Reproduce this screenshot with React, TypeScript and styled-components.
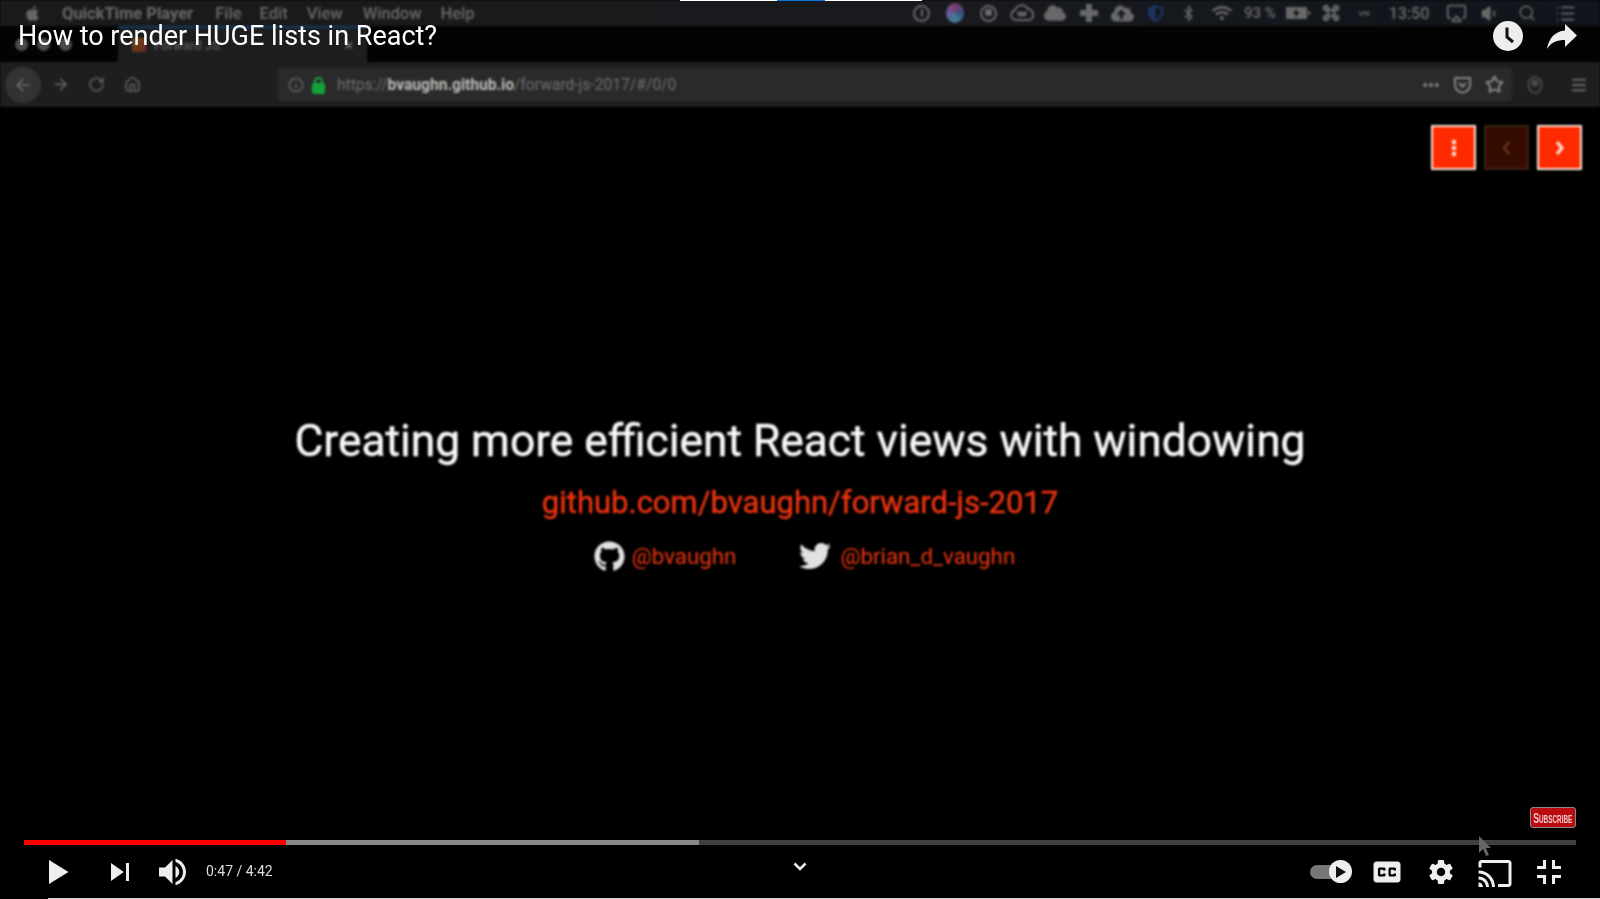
import React from 'react';
import styled, { createGlobalStyle } from 'styled-components';
import {
  FaApple,
  FaBluetoothB,
  FaCloud,
  FaCloudUploadAlt,
  FaGithub,
  FaShieldAlt,
  FaTwitter,
  FaWifi,
} from 'react-icons/fa';
import { Airplay, ArrowLeft, ArrowRight, Ellipsis, Home, Info, List, Menu, RotateCw, Search, Star, Volume1 } from 'lucide-react';

const GlobalStyle = createGlobalStyle`
  html, body {
    margin: 0;
    padding: 0;
    background: #000;
    font-family: Roboto, 'Liberation Sans', sans-serif;
  }
`;

const Stage = styled.div`
  position: relative;
  width: 1600px;
  height: 899px;
  overflow: hidden;
  background: #000;
`;

/* The screen recording inside the video, soft like the source */
const Recording = styled.div`
  display: flex;
  flex-direction: column;
  height: 100%;
  filter: blur(0.8px);
`;

const MenuBar = styled.div`
  display: flex;
  align-items: center;
  height: 26px;
  flex: none;
  padding: 0 18px 0 24px;
  background: linear-gradient(90deg, #1c1a1a, #181a1e 60%, #10151c);
  color: #666;
  font-size: 16.5px;
`;

const MenuItem = styled.span<{ $bold?: boolean; $left: number }>`
  margin-left: ${(p) => p.$left}px;
  font-weight: ${(p) => (p.$bold ? 700 : 500)};
  white-space: nowrap;
`;

const Status = styled.div`
  display: flex;
  align-items: center;
  margin-left: auto;
`;

const Slot = styled.span<{ $w?: number; $color?: string; $size?: number }>`
  display: flex;
  align-items: center;
  justify-content: center;
  width: ${(p) => p.$w ?? 33.4}px;
  color: ${(p) => p.$color ?? '#686868'};
  font-size: ${(p) => p.$size ?? 15}px;
  font-weight: 500;
  white-space: nowrap;
`;

const RingGlyph = styled.span<{ $dot?: boolean }>`
  display: block;
  position: relative;
  box-sizing: border-box;
  width: 17px;
  height: 17px;
  border: 2px solid #686868;
  border-radius: 50%;
  &::after {
    content: '';
    position: absolute;
    left: ${(p) => (p.$dot ? '3px' : '5.5px')};
    top: 2.5px;
    width: ${(p) => (p.$dot ? '7px' : '2px')};
    height: ${(p) => (p.$dot ? '7px' : '8px')};
    border-radius: 2px;
    background: #686868;
  }
`;

const SiriGlyph = styled.span`
  display: block;
  width: 18px;
  height: 20px;
  border-radius: 50%;
  background: conic-gradient(#7a3a6a, #3a4f86, #3c7f94, #6a5a9a, #7a3a6a);
`;

const TabStrip = styled.div`
  display: flex;
  align-items: center;
  flex: none;
  height: 36px;
  padding-left: 15px;
  background: #030303;
`;

const TrafficDot = styled.span`
  width: 13px;
  height: 13px;
  margin-right: 9px;
  border-radius: 50%;
  background: #4c4c4c;
`;

const Tab = styled.div`
  display: flex;
  align-items: center;
  box-sizing: border-box;
  width: 249px;
  height: 36px;
  margin-left: 37px;
  padding: 0 14px;
  background: #1e1e1e;
  border-top: 2px solid #123a66;
  color: #555;
  font-size: 13px;
  font-weight: 500;
`;

const TabClose = styled.span`
  margin-left: auto;
  font-size: 16px;
  color: #6c6c6c;
`;

const TabIcon = styled.span`
  width: 14px;
  height: 14px;
  margin-right: 8px;
  border-radius: 2px;
  background: linear-gradient(135deg, #6b4a1c, #6b2a1c);
`;

const NavBar = styled.div`
  display: flex;
  align-items: center;
  flex: none;
  height: 45px;
  padding-left: 5px;
  background: #1e1e1e;
  color: #686868;
`;

const BackCircle = styled.span`
  display: flex;
  align-items: center;
  justify-content: center;
  width: 36px;
  height: 36px;
  border-radius: 50%;
  background: #333;
`;

const NavIcon = styled.span<{ $w: number; $color?: string }>`
  display: flex;
  justify-content: center;
  width: ${(p) => p.$w}px;
  color: ${(p) => p.$color ?? 'inherit'};
`;

const UrlBox = styled.div`
  display: flex;
  align-items: center;
  box-sizing: border-box;
  width: 1234px;
  height: 33px;
  margin-left: 127px;
  padding-left: 10px;
  border-radius: 3px;
  background: #2a2a2a;
`;

const LockGlyph = styled.span`
  position: relative;
  width: 13px;
  height: 11px;
  margin: 7px 12px 0 8px;
  border-radius: 2px;
  background: #13a23a;
  &::before {
    content: '';
    position: absolute;
    left: 2px;
    top: -6px;
    width: 5px;
    height: 6px;
    border: 2px solid #13a23a;
    border-bottom: 0;
    border-radius: 5px 5px 0 0;
  }
`;

const UrlText = styled.span`
  font-size: 15.6px;
  color: #6c6c6c;
  white-space: nowrap;
  b {
    font-weight: 700;
    color: #b8b8b8;
  }
`;

const UrlActions = styled.div`
  display: flex;
  align-items: center;
  margin-left: auto;
  padding-right: 2px;
  color: #858585;
`;

const Slide = styled.div`
  flex: 1;
  display: flex;
  flex-direction: column;
  padding-top: 18px;
`;

const SlideNav = styled.div`
  display: flex;
  justify-content: flex-end;
  gap: 8px;
  padding-right: 18px;
`;

const SlideButton = styled.span<{ $off?: boolean }>`
  display: flex;
  align-items: center;
  justify-content: center;
  box-sizing: border-box;
  width: 45px;
  height: 45px;
  border: 2px solid ${(p) => (p.$off ? '#3a2418' : '#fbe6dd')};
  background: ${(p) => (p.$off ? '#360c00' : '#ff2a00')};
  color: ${(p) => (p.$off ? '#6b3a2a' : '#ffe6dc')};
`;

const Deck = styled.div`
  display: flex;
  flex-direction: column;
  align-items: center;
  margin-top: 243px;
`;

const Headline = styled.div`
  font-size: 44.3px;
  line-height: 56px;
  color: #f8f8f8;
  -webkit-text-stroke: 0.5px #f8f8f8;
  white-space: nowrap;
`;

const RepoLink = styled.div`
  margin-top: 14px;
  font-size: 31px;
  line-height: 40px;
  color: #f03410;
  -webkit-text-stroke: 0.4px #f03410;
  white-space: nowrap;
`;

const Handles = styled.div`
  display: flex;
  align-items: center;
  height: 32px;
  margin-top: 17px;
  margin-left: 9px;
  color: #e2e2e2;
`;

const Handle = styled.span<{ $left?: number; $right?: number }>`
  margin-left: ${(p) => p.$left ?? 7}px;
  margin-right: ${(p) => p.$right ?? 0}px;
  font-size: 22.3px;
  color: #f0360f;
`;

/* Player chrome lying over the video */
const LoadStrip = styled.div`
  position: absolute;
  top: 0;
  left: 680px;
  width: 242px;
  height: 1px;
  background: linear-gradient(90deg, #fff 40%, #0a72d8 40%, #0a72d8 60%, #fff 60%);
`;

const TitleRow = styled.div`
  position: absolute;
  top: 18px;
  left: 18px;
  right: 23px;
  display: flex;
  align-items: center;
  height: 36px;
`;

const VideoTitle = styled.div`
  font-size: 27px;
  color: #fff;
  white-space: nowrap;
`;

const TitleActions = styled.div`
  display: flex;
  align-items: center;
  gap: 24px;
  margin-left: auto;
`;

const BottomChrome = styled.div`
  position: absolute;
  left: 0;
  right: 0;
  bottom: 0;
`;

const Watermark = styled.div`
  position: absolute;
  right: 24px;
  bottom: 71px;
  box-sizing: border-box;
  width: 46px;
  height: 21px;
  border: 1px solid #8a8a8a;
  border-radius: 3px;
  background: #bb0a10;
  color: #f0c8c8;
  text-align: center;
  overflow: hidden;
`;

const WatermarkText = styled.span`
  display: inline-block;
  font: 700 15px/18px 'Liberation Sans', sans-serif;
  font-variant: small-caps;
  transform: scaleX(0.58);
  transform-origin: center;
  margin: 0 -16px;
`;

const Pointer = styled.svg`
  position: absolute;
  left: 1478px;
  bottom: 42px;
`;

const Progress = styled.div`
  display: flex;
  height: 5px;
  margin: 0 24px;
  background: #3f3f3f;
`;

const ProgressPart = styled.div<{ $w: number; $color: string }>`
  width: ${(p) => p.$w}px;
  background: ${(p) => p.$color};
`;

const Controls = styled.div`
  position: relative;
  display: flex;
  align-items: center;
  height: 53px;
  padding: 0 24px 0 31px;
`;

const Control = styled.span<{ $gap?: number }>`
  display: flex;
  width: 54px;
  height: 54px;
  margin-left: ${(p) => p.$gap ?? 0}px;
  flex: none;
`;

const TimeText = styled.span`
  margin: 0 0 2px 5px;
  font-size: 14px;
  color: #ddd;
  white-space: nowrap;
`;

const Chevron = styled.svg`
  position: absolute;
  left: 793px;
  top: 17px;
`;

const RightControls = styled.div`
  display: flex;
  align-items: center;
  margin-left: auto;
`;

const AutoToggle = styled.span`
  position: relative;
  display: block;
  width: 31px;
  height: 14px;
  margin-right: 19px;
  border-radius: 7px;
  background: #777;
`;

const AutoKnob = styled.span`
  position: absolute;
  left: 19px;
  top: -4.5px;
  display: flex;
  align-items: center;
  justify-content: center;
  width: 23px;
  height: 23px;
  border-radius: 50%;
  background: #eee;
`;

const BottomEdge = styled.div`
  height: 1px;
  margin-left: 48px;
  background: #d8d8d8;
`;

const YtIcon = ({ d }: { d: string }) => (
  <svg width="54" height="54" viewBox="0 0 36 36" fill="#eee">
    <path d={d} />
  </svg>
);

const PLAY = 'M12 26 25 18 12 10z';
const NEXT = 'M12 24 20.5 18 12 12V24zM22 12v12h2V12h-2z';
const VOLUME =
  'M8 21H12L17 26V10L12 15H8V21ZM19 14V22C20.48 21.32 21.5 19.77 21.5 18C21.5 16.26 20.48 14.74 19 14ZM19 11.29C21.89 12.15 24 14.83 24 18C24 21.17 21.89 23.85 19 24.71V26.77C23.01 25.86 26 22.28 26 18C26 13.72 23.01 10.14 19 9.23V11.29Z';
const CC =
  'M11 11C9.89 11 9 11.9 9 13V23C9 24.1 9.89 25 11 25H25C26.1 25 27 24.1 27 23V13C27 11.9 26.1 11 25 11H11ZM17 17H15.5V16.5H13.5V19.5H15.5V19H17V20C17 20.55 16.55 21 16 21H13C12.45 21 12 20.55 12 20V16C12 15.45 12.45 15 13 15H16C16.55 15 17 15.45 17 16V17ZM24 17H22.5V16.5H20.5V19.5H22.5V19H24V20C24 20.55 23.55 21 23 21H20C19.45 21 19 20.55 19 20V16C19 15.45 19.45 15 20 15H23C23.55 15 24 15.45 24 16V17Z';
const GEAR =
  'm23.94 18.78c.03-.25.05-.51.05-.78s-.02-.52-.05-.78l1.68-1.32c.15-.12.19-.33.09-.51l-1.6-2.76c-.09-.17-.31-.24-.48-.17l-1.99.8c-.41-.32-.86-.58-1.35-.78l-.3-2.12c-.02-.19-.19-.33-.39-.33h-3.2c-.2 0-.36.14-.39.33l-.3 2.12c-.48.2-.93.47-1.35.78l-1.99-.8c-.18-.07-.39 0-.48.17l-1.6 2.76c-.1.17-.05.39.09.51l1.68 1.32c-.03.25-.05.52-.05.78s.02.52.05.78l-1.68 1.32c-.15.12-.19.33-.09.51l1.6 2.76c.09.17.31.24.48.17l1.99-.8c.41.32.86.58 1.35.78l.3 2.12c.02.19.19.33.39.33h3.2c.2 0 .36-.14.39-.33l.3-2.12c.48-.2.93-.47 1.35-.78l1.99.8c.18.07.39 0 .48-.17l1.6-2.76c.09-.17.05-.39-.09-.51l-1.68-1.32zm-5.94 2.01c-1.54 0-2.8-1.25-2.8-2.8s1.25-2.8 2.8-2.8 2.8 1.25 2.8 2.8-1.25 2.8-2.8 2.8z';
const CAST =
  'M27 10H9c-1.1 0-2 .9-2 2v3h2v-3h18v14h-7v2h7c1.1 0 2-.9 2-2V12c0-1.1-.9-2-2-2zM7 25v3h3c0-1.66-1.34-3-3-3zm0-4v2c2.76 0 5 2.24 5 5h2c0-3.87-3.13-7-7-7zm0-4v2c4.97 0 9 4.03 9 9h2c0-6.08-4.93-11-11-11z';
const EXIT_FS = 'M14 14H10v2h6v-6h-2zM22 14v-4h-2v6h6v-2zM20 26h2v-4h4v-2h-6zM14 22v4h2v-6h-6v2z';

export default function App() {
  return (
    <Stage>
      <GlobalStyle />
      <Recording>
        <MenuBar>
          <FaApple size={17} />
          <MenuItem $bold $left={21}>QuickTime Player</MenuItem>
          <MenuItem $left={22}>File</MenuItem>
          <MenuItem $left={18}>Edit</MenuItem>
          <MenuItem $left={19}>View</MenuItem>
          <MenuItem $left={20}>Window</MenuItem>
          <MenuItem $left={19}>Help</MenuItem>
          <Status>
            <Slot><RingGlyph /></Slot>
            <Slot><SiriGlyph /></Slot>
            <Slot><RingGlyph $dot /></Slot>
            <Slot>
              <svg width="24" height="18" viewBox="0 0 24 18" fill="none" stroke="currentColor" strokeWidth="2">
                <path d="M6 16a5 5 0 0 1-1-9.800 7 7 0 0 1 13-1 5.500 5.500 0 0 1 1 10.800z" />
                <path d="M8 9a2.500 2.500 0 0 1 4 2 2.500 2.500 0 0 0 4-2 2.500 2.500 0 0 0-4 2 2.500 2.500 0 0 1-4-2z" />
              </svg>
            </Slot>
            <Slot><FaCloud size={22} /></Slot>
            <Slot>
              <svg width="20" height="20" viewBox="0 0 20 20" fill="currentColor">
                <path d="M7 1h6v6h6v6h-6v6H7v-6H1V7h6z" />
              </svg>
            </Slot>
            <Slot><FaCloudUploadAlt size={23} /></Slot>
            <Slot $color="#1c3560"><FaShieldAlt size={17} /></Slot>
            <Slot><FaBluetoothB size={17} /></Slot>
            <Slot><FaWifi size={20} /></Slot>
            <Slot $w={42}>93 %</Slot>
            <Slot $w={33}>
              <svg width="24" height="14" viewBox="0 0 24 14" fill="currentColor">
                <path d="M0 1h21v12H0zM22 5h2v4h-2z" />
                <path d="M11 2 7 8h3l-1 4 5-6h-3z" fill="#14161a" />
              </svg>
            </Slot>
            <Slot $w={34}>
              <svg width="18" height="18" viewBox="0 0 18 18" fill="none" stroke="currentColor" strokeWidth="2.500">
                <path d="M6 6h6v6H6zM6 6H4a2 2 0 1 1 2-2zM12 6V4a2 2 0 1 1 2 2zM12 12h2a2 2 0 1 1-2 2zM6 12v2a2 2 0 1 1-2-2z" />
              </svg>
            </Slot>
            <Slot $w={32} $size={8}>VN</Slot>
            <Slot $w={58} $size={16}>13:50</Slot>
            <Slot $w={37}><Airplay size={21} /></Slot>
            <Slot $w={30}><Volume1 size={19} fill="currentColor" /></Slot>
            <Slot $w={43}><Search size={18} /></Slot>
            <Slot $w={34}><List size={21} /></Slot>
          </Status>
        </MenuBar>
        <TabStrip>
          <TrafficDot />
          <TrafficDot />
          <TrafficDot />
          <Tab>
            <TabIcon />
            Forward JS
            <TabClose>×</TabClose>
          </Tab>
        </TabStrip>
        <NavBar>
          <BackCircle><ArrowLeft size={20} /></BackCircle>
          <NavIcon $w={38}><ArrowRight size={19} /></NavIcon>
          <NavIcon $w={34}><RotateCw size={17} /></NavIcon>
          <NavIcon $w={38}><Home size={17} /></NavIcon>
          <UrlBox>
            <Info size={16} />
            <LockGlyph />
            <UrlText>https://<b>bvaughn.github.io</b>/forward-js-2017/#/0/0</UrlText>
            <UrlActions>
              <NavIcon $w={32}><Ellipsis size={20} strokeWidth={3} /></NavIcon>
              <NavIcon $w={31}>
                <svg width="17" height="18" viewBox="0 0 17 18" fill="none" stroke="currentColor" strokeWidth="2">
                  <path d="M1 2h15v7a7.500 7.500 0 0 1-15 0z" />
                  <path d="M5 7l3.500 3.500L12 7" />
                </svg>
              </NavIcon>
              <NavIcon $w={32}><Star size={19} strokeWidth={2.500} /></NavIcon>
            </UrlActions>
          </UrlBox>
          <NavIcon $w={46} $color="#4a4a4a">
            <svg width="16" height="18" viewBox="0 0 16 18" fill="none" stroke="currentColor" strokeWidth="2">
              <ellipse cx="8" cy="9" rx="6.500" ry="8" />
              <circle cx="8" cy="7" r="2.500" fill="currentColor" />
            </svg>
          </NavIcon>
          <NavIcon $w={42}><Menu size={18} strokeWidth={2.500} /></NavIcon>
        </NavBar>
        <Slide>
          <SlideNav>
            <SlideButton>
              <svg width="6" height="16" viewBox="0 0 6 16" fill="currentColor">
                <rect x="1" y="0" width="4" height="4" />
                <rect x="1" y="6" width="4" height="4" />
                <rect x="1" y="12" width="4" height="4" />
              </svg>
            </SlideButton>
            <SlideButton $off>
              <svg width="9" height="14" viewBox="0 0 9 14" fill="none" stroke="currentColor" strokeWidth="2">
                <path d="M7 1 2 7l5 6" />
              </svg>
            </SlideButton>
            <SlideButton>
              <svg width="9" height="14" viewBox="0 0 9 14" fill="none" stroke="currentColor" strokeWidth="3">
                <path d="M2 1l5 6-5 6" />
              </svg>
            </SlideButton>
          </SlideNav>
          <Deck>
            <Headline>Creating more efficient React views with windowing</Headline>
            <RepoLink>github.com/bvaughn/forward-js-2017</RepoLink>
            <Handles>
              <FaGithub size={31} />
              <Handle $right={63}>@bvaughn</Handle>
              <FaTwitter size={32} />
              <Handle $left={9}>@brian_d_vaughn</Handle>
            </Handles>
          </Deck>
        </Slide>
      </Recording>

      <LoadStrip />
      <TitleRow>
        <VideoTitle>How to render HUGE lists in React?</VideoTitle>
        <TitleActions>
          <svg width="30" height="30" viewBox="0 0 30 30">
            <circle cx="15" cy="15" r="15" fill="#eee" />
            <path d="M14 6.500v9.500l6 5" fill="none" stroke="#111" strokeWidth="3" />
          </svg>
          <svg width="30" height="25" viewBox="0 0 30 25" fill="#eee">
            <path d="M18 0 30 11.500 18 23v-7C9.500 16 4 18.500 0 25 1.500 15.500 7 7.500 18 6.500z" />
          </svg>
        </TitleActions>
      </TitleRow>

      <BottomChrome>
        <Watermark><WatermarkText>Subscribe</WatermarkText></Watermark>
        <Pointer width="14" height="22" viewBox="0 0 14 22" fill="#666">
          <path d="M1 1 13 13H8l3 7-3 1-3-7-4 4z" />
        </Pointer>
        <Progress>
          <ProgressPart $w={262} $color="#f00" />
          <ProgressPart $w={413} $color="#888" />
        </Progress>
        <Controls>
          <Control><YtIcon d={PLAY} /></Control>
          <Control $gap={8}><YtIcon d={NEXT} /></Control>
          <Control><YtIcon d={VOLUME} /></Control>
          <TimeText>0:47 / 4:42</TimeText>
          <Chevron width="14" height="9" viewBox="0 0 14 9" fill="none" stroke="#eee" strokeWidth="2.500">
            <path d="M1.500 1.500 7 7l5.500-5.500" />
          </Chevron>
          <RightControls>
            <AutoToggle>
              <AutoKnob>
                <svg width="10" height="12" viewBox="0 0 10 12" fill="#111">
                  <path d="M0 0l10 6-10 6z" />
                </svg>
              </AutoKnob>
            </AutoToggle>
            <Control><YtIcon d={CC} /></Control>
            <Control><YtIcon d={GEAR} /></Control>
            <Control><YtIcon d={CAST} /></Control>
            <Control><YtIcon d={EXIT_FS} /></Control>
          </RightControls>
        </Controls>
        <BottomEdge />
      </BottomChrome>
    </Stage>
  );
}
